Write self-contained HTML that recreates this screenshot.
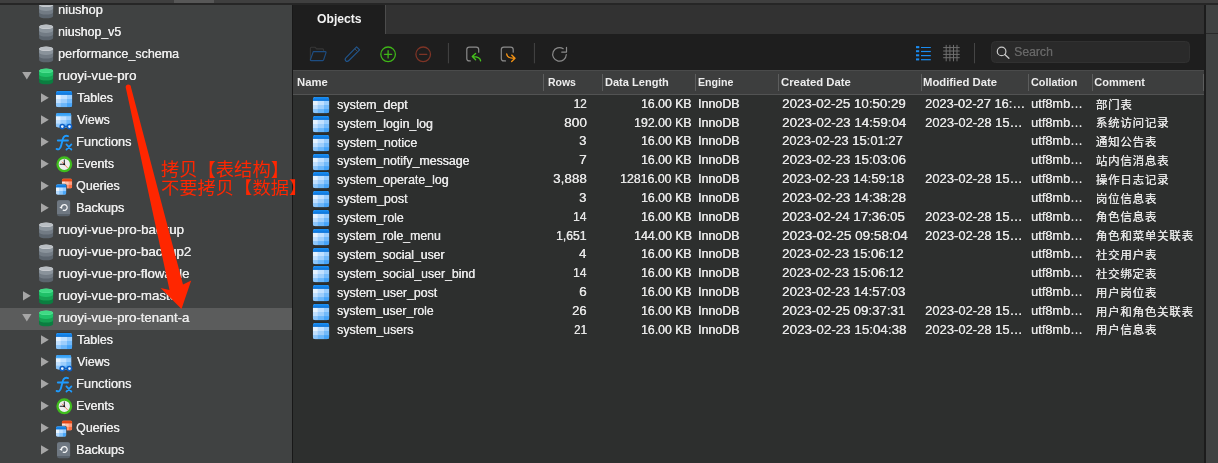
<!DOCTYPE html>
<html lang="zh"><head><meta charset="utf-8"><title>Navicat</title>
<style>
*{box-sizing:border-box;margin:0;padding:0}
html,body{width:1218px;height:463px;overflow:hidden;background:#2d2f2e}
body{font-family:"Liberation Sans","Noto Sans CJK SC",sans-serif;color:#e6e6e6}
#app{will-change:transform;position:relative;width:1218px;height:463px;overflow:hidden;background:#2d2f2e}
svg{display:block;overflow:visible}
.defs{position:absolute;width:0;height:0;overflow:hidden}
#topstrip{position:absolute;left:0;top:0;width:1218px;height:4.5px;background:linear-gradient(#3f3f3f 0,#3f3f3f 3px,#262626 3px,#262626 4.5px);z-index:5}
#topthumb{position:absolute;left:174px;top:0;width:40px;height:3px;background:#575757;z-index:6}
#sidebar{position:absolute;left:0;top:0;width:291.5px;height:463px;background:#404242;overflow:hidden}
#divider{position:absolute;left:291.5px;top:4px;width:1.5px;height:459px;background:#181818}
.trow{position:absolute;left:0;width:291.5px;height:22px}
.trow.sel{background:none}
#selband{position:absolute;left:0;top:307.8px;width:291.5px;height:22px;background:#5b5c5c}
.trow .tri{position:absolute;top:6px}
.trow.l0 .tri{left:21.5px}
.trow.l1 .tri{left:39.5px}
.trow .ticon{position:absolute;top:2.7px}
.trow.l0 .ticon{left:37px}
.trow.l1 .ticon{left:55px}
#main{position:absolute;left:293px;top:0;width:925px;height:463px}
#tabbar{position:absolute;left:0;top:4.5px;width:912px;height:29.5px;background:#323232}
#tab{position:absolute;left:0;top:0;width:92.8px;height:29.5px;background:#1e1e1e;border-right:1px solid #4c4c4c}
#toolbar{position:absolute;left:0;top:34px;width:912px;height:36px;background:#1e1e1e}
#toolbar svg{position:absolute;left:0;top:0}
#search{position:absolute;left:698px;top:7px;width:199px;height:21.5px;background:#2a2a2a;border:1px solid #313131;border-radius:4.5px}
#thead{position:absolute;left:0;top:70px;width:912px;height:25px;background:#3d3e3e;border-top:1.5px solid #4a4b4b;border-bottom:1px solid #525353}
.sep{position:absolute;top:2.5px;width:1px;height:17px;background:#5c5d5d}
.sep.c-rows{left:250.2px}.sep.c-len{left:309px}.sep.c-eng{left:402.1px}.sep.c-cre{left:485px}.sep.c-mod{left:628.2px}.sep.c-col{left:735px}.sep.c-com{left:799px}.sep.c-end{left:910.2px}
#tbody{position:absolute;left:0;top:0;width:912px}
.ricon{position:absolute;left:19px}
#rpanel{position:absolute;left:911.3px;top:4.5px;width:13.7px;height:458.5px;background:#404242;border-left:2.5px solid #1c1c1c}
#rpanel:after{content:"";position:absolute;left:0;top:28.5px;width:12px;height:1px;background:#2a2a2a}
#texts{position:absolute;left:0;top:0;width:1218px;height:463px;z-index:10}
.t{position:absolute;line-height:0;white-space:nowrap;transform-origin:0 0;color:#e8e8e8}
.t.tl{font-size:12.25px;color:#ebebeb}
.t.tn{font-size:12.5px;color:#e8e8e8}
.t.tc{font-size:12px;color:#e6e6e6}
.t.tk{font-size:11.5px;letter-spacing:0.75px;color:#e6e6e6}
.t.th{font-size:11px;font-weight:bold;color:#ededed}
.t.tab{font-size:12px;font-weight:bold;color:#f2f2f2}
.t.srch{font-size:12.25px;color:#656565;text-shadow:0.3px 0 0 currentColor}
#annot{position:absolute;left:0;top:0;width:1218px;height:463px;z-index:20;pointer-events:none}
.t.tl,.t.tn{text-shadow:0.35px 0 0 currentColor}
.t.tc{text-shadow:0.3px 0 0 currentColor}
.t.tk{text-shadow:0.25px 0 0 currentColor}

</style></head>
<body>
<svg class="defs">
<defs>
<linearGradient id="g-bluehead" x1="0" y1="0" x2="0" y2="1"><stop offset="0" stop-color="#1c92f6"/><stop offset="1" stop-color="#0a70d6"/></linearGradient>
<linearGradient id="g-viewhead" x1="0" y1="0" x2="0" y2="1"><stop offset="0" stop-color="#2a98f3"/><stop offset="1" stop-color="#55b2f9"/></linearGradient>
<linearGradient id="g-orangehead" x1="0" y1="0" x2="0" y2="1"><stop offset="0" stop-color="#f4511e"/><stop offset="1" stop-color="#d8400f"/></linearGradient>
<clipPath id="cp-table"><rect x="0.8" y="0.9" width="16.5" height="16.3" rx="2.6"/></clipPath>
<clipPath id="cp-view"><rect x="0.8" y="0.9" width="15.6" height="14.6" rx="2.4"/></clipPath>
<symbol id="i-tri-open" viewBox="0 0 10 10"><path d="M0.2 1 L9.5 1 L4.85 8.6 Z" fill="#a6a6a6"/></symbol>
<symbol id="i-tri-closed" viewBox="0 0 10 10"><path d="M1 0.2 L8.8 4.8 L1 9.4 Z" fill="#a6a6a6"/></symbol>
<symbol id="i-db-gray" viewBox="0 0 18 18">
 <path d="M2.1 2.8 V14 A7 2.3 0 0 0 16.1 14 V2.8 Z" fill="#5c656e"/>
 <path d="M2.1 2.8 V10.3 A7 2.3 0 0 0 16.1 10.3 V2.8 Z" fill="#727b84"/>
 <path d="M2.1 2.8 V6.6 A7 2.3 0 0 0 16.1 6.6 V2.8 Z" fill="#8a939b"/>
 <ellipse cx="9.1" cy="2.8" rx="7" ry="2.3" fill="#d2d5d8"/>
 <ellipse cx="9.1" cy="2.6" rx="6.6" ry="1.9" fill="#b9bec3"/>
</symbol>
<symbol id="i-db-green" viewBox="0 0 18 18">
 <path d="M2.1 2.8 V14 A7 2.3 0 0 0 16.1 14 V2.8 Z" fill="#0b7d40"/>
 <path d="M2.1 2.8 V10.3 A7 2.3 0 0 0 16.1 10.3 V2.8 Z" fill="#15a052"/>
 <path d="M2.1 2.8 V6.6 A7 2.3 0 0 0 16.1 6.6 V2.8 Z" fill="#1fc068"/>
 <ellipse cx="9.1" cy="2.8" rx="7" ry="2.3" fill="#5be39a"/>
 <ellipse cx="9.1" cy="2.6" rx="6.6" ry="1.9" fill="#3fda84"/>
</symbol>
<symbol id="i-table" viewBox="0 0 18 18">
 <rect x="0.5" y="0.6" width="17.1" height="16.9" rx="2.9" fill="#1f2021" opacity=".55"/>
 <g clip-path="url(#cp-table)">
  <rect x="0.8" y="0.9" width="16.5" height="16.4" fill="#9dcefc"/>
  <rect x="0.8" y="0.9" width="16.5" height="4.1" fill="url(#g-bluehead)"/>
  <rect x="0.8" y="4.9" width="5.1" height="4.2" fill="#e4f2ff"/><rect x="5.8" y="4.9" width="6.3" height="4.2" fill="#c0e0ff"/><rect x="12" y="4.9" width="5.3" height="4.2" fill="#9bcefe"/>
  <rect x="0.8" y="9" width="5.1" height="4.2" fill="#c0e0ff"/><rect x="5.8" y="9" width="6.3" height="4.2" fill="#9dcefc"/><rect x="12" y="9" width="5.3" height="4.2" fill="#72bafb"/>
  <rect x="0.8" y="13.1" width="5.1" height="4.2" fill="#8cc6fb"/><rect x="5.8" y="13.1" width="6.3" height="4.2" fill="#6ab6fa"/><rect x="12" y="13.1" width="5.3" height="4.2" fill="#46a4f8"/>
 </g>
</symbol>
<symbol id="i-tables" viewBox="0 0 18 18"><use href="#i-table"/></symbol>
<symbol id="i-views" viewBox="0 0 18 18">
 <g clip-path="url(#cp-view)">
  <rect x="0.8" y="0.9" width="15.6" height="14.7" fill="#9dcefc"/>
  <rect x="0.8" y="0.9" width="15.6" height="3.6" fill="url(#g-viewhead)"/>
  <rect x="0.8" y="4.4" width="5" height="3.8" fill="#e4f2ff"/><rect x="5.6" y="4.4" width="6" height="3.8" fill="#c0e0ff"/><rect x="11.4" y="4.4" width="5" height="3.8" fill="#9bcefe"/>
  <rect x="0.8" y="8" width="5" height="3.9" fill="#c0e0ff"/><rect x="5.6" y="8" width="6" height="3.9" fill="#9dcefc"/><rect x="11.4" y="8" width="5" height="3.9" fill="#72bafb"/>
  <rect x="0.8" y="11.7" width="5" height="4" fill="#8cc6fb"/><rect x="5.6" y="11.7" width="6" height="4" fill="#6ab6fa"/><rect x="11.4" y="11.7" width="5" height="4" fill="#46a4f8"/>
 </g>
 <path d="M9.3 14.3 H12.5" stroke="#0c5fc6" stroke-width="1.3" fill="none"/>
 <circle cx="7.3" cy="14.6" r="2.1" fill="#e8f4ff" stroke="#0c5fc6" stroke-width="1.5"/>
 <circle cx="14.5" cy="14.6" r="2.1" fill="#e8f4ff" stroke="#0c5fc6" stroke-width="1.5"/>
</symbol>
<symbol id="i-fx" viewBox="0 0 18 18">
 <path d="M1.6 14.9 C3.5 16 5.2 15 6 12 L8 4.5 C8.7 2 10.6 1.2 13 2.1" fill="none" stroke="#1e9bff" stroke-width="1.9" stroke-linecap="round"/>
 <path d="M2.8 6.5 H13" stroke="#1e9bff" stroke-width="1.8" stroke-linecap="round"/>
 <path d="M11.4 10.3 L16.4 15.7 M16.4 10.3 L11.4 15.7" fill="none" stroke="#1e9bff" stroke-width="1.7" stroke-linecap="round"/>
</symbol>
<symbol id="i-events" viewBox="0 0 18 18">
 <circle cx="9.3" cy="8.3" r="6.8" fill="#ededed" stroke="#3fbd1d" stroke-width="2.3"/>
 <path d="M7.2 6 L12.5 11.8" stroke="#f0794f" stroke-width="0.9" stroke-linecap="round"/>
 <path d="M9.3 8.3 V3.9" stroke="#222" stroke-width="1" stroke-linecap="round"/>
 <path d="M9.3 8.3 H5.2" stroke="#222" stroke-width="1.1" stroke-linecap="round"/>
 <circle cx="9.3" cy="8.3" r="0.9" fill="#111"/>
</symbol>
<symbol id="i-queries" viewBox="0 0 18 18">
 <clipPath id="cp-q1"><rect x="6.8" y="0.5" width="10.4" height="10" rx="1.8"/></clipPath>
 <clipPath id="cp-q2"><rect x="1" y="6.3" width="10.3" height="10.4" rx="1.8"/></clipPath>
 <g clip-path="url(#cp-q1)">
  <rect x="6.8" y="0.5" width="10.4" height="10" fill="#ff9a78"/>
  <rect x="6.8" y="0.5" width="10.4" height="3.1" fill="url(#g-orangehead)"/>
  <rect x="6.8" y="3.6" width="3.6" height="3.3" fill="#ffe3d9"/><rect x="10.4" y="3.6" width="3.4" height="3.3" fill="#ffc2ad"/><rect x="13.8" y="3.6" width="3.4" height="3.3" fill="#ff9f80"/>
  <rect x="6.8" y="6.9" width="3.6" height="3.6" fill="#ffc2ad"/><rect x="10.4" y="6.9" width="3.4" height="3.6" fill="#ff9573"/><rect x="13.8" y="6.9" width="3.4" height="3.6" fill="#fc6f43"/>
 </g>
 <rect x="0.5" y="5.8" width="11.3" height="11.4" rx="2.2" fill="#404242"/>
 <g clip-path="url(#cp-q2)">
  <rect x="1" y="6.3" width="10.3" height="10.4" fill="#8cc6fb"/>
  <rect x="1" y="6.3" width="10.3" height="3.3" fill="url(#g-bluehead)"/>
  <rect x="1" y="9.6" width="3.5" height="3.5" fill="#e9f5ff"/><rect x="4.5" y="9.6" width="3.4" height="3.5" fill="#c0e0ff"/><rect x="7.9" y="9.6" width="3.4" height="3.5" fill="#9bcefe"/>
  <rect x="1" y="13.1" width="3.5" height="3.6" fill="#b6dbfe"/><rect x="4.5" y="13.1" width="3.4" height="3.6" fill="#86c4fb"/><rect x="7.9" y="13.1" width="3.4" height="3.6" fill="#4aa6f8"/>
 </g>
</symbol>
<symbol id="i-backups" viewBox="0 0 18 18">
 <rect x="2" y="0.2" width="13.1" height="16" rx="2.2" fill="#58616a"/>
 <path d="M2 13.9 V2.4 A2.2 2.2 0 0 1 4.2 0.2 H12.9 A2.2 2.2 0 0 1 15.1 2.4 V13.9 Z" fill="#6f7882"/>
 <path d="M6.4 7.1 A2.9 2.9 0 1 1 8.2 10.2" fill="none" stroke="#f4f5f6" stroke-width="1.25" stroke-linecap="round"/>
 <path d="M4.3 7.5 L7.2 6 L7.2 8.9 Z" fill="#f4f5f6"/>
</symbol>
</defs>
</svg>
<div id="app">
<div id="topstrip"></div><div id="topthumb"></div>
<div id="sidebar">
<div id="selband"></div>
<div class="trow l0" style="top:-0.6px"><svg class="ticon" width="18" height="18"><use href="#i-db-gray"/></svg></div>
<div class="trow l0" style="top:21.4px"><svg class="ticon" width="18" height="18"><use href="#i-db-gray"/></svg></div>
<div class="trow l0" style="top:43.4px"><svg class="ticon" width="18" height="18"><use href="#i-db-gray"/></svg></div>
<div class="trow l0" style="top:65.4px"><svg class="tri" width="10" height="10"><use href="#i-tri-open"/></svg><svg class="ticon" width="18" height="18"><use href="#i-db-green"/></svg></div>
<div class="trow l1" style="top:87.4px"><svg class="tri" width="10" height="10"><use href="#i-tri-closed"/></svg><svg class="ticon" width="18" height="18"><use href="#i-tables"/></svg></div>
<div class="trow l1" style="top:109.4px"><svg class="tri" width="10" height="10"><use href="#i-tri-closed"/></svg><svg class="ticon" width="18" height="18"><use href="#i-views"/></svg></div>
<div class="trow l1" style="top:131.4px"><svg class="tri" width="10" height="10"><use href="#i-tri-closed"/></svg><svg class="ticon" width="18" height="18"><use href="#i-fx"/></svg></div>
<div class="trow l1" style="top:153.4px"><svg class="tri" width="10" height="10"><use href="#i-tri-closed"/></svg><svg class="ticon" width="18" height="18"><use href="#i-events"/></svg></div>
<div class="trow l1" style="top:175.4px"><svg class="tri" width="10" height="10"><use href="#i-tri-closed"/></svg><svg class="ticon" width="18" height="18"><use href="#i-queries"/></svg></div>
<div class="trow l1" style="top:197.4px"><svg class="tri" width="10" height="10"><use href="#i-tri-closed"/></svg><svg class="ticon" width="18" height="18"><use href="#i-backups"/></svg></div>
<div class="trow l0" style="top:219.4px"><svg class="ticon" width="18" height="18"><use href="#i-db-gray"/></svg></div>
<div class="trow l0" style="top:241.4px"><svg class="ticon" width="18" height="18"><use href="#i-db-gray"/></svg></div>
<div class="trow l0" style="top:263.4px"><svg class="ticon" width="18" height="18"><use href="#i-db-gray"/></svg></div>
<div class="trow l0" style="top:285.4px"><svg class="tri" width="10" height="10"><use href="#i-tri-closed"/></svg><svg class="ticon" width="18" height="18"><use href="#i-db-green"/></svg></div>
<div class="trow l0 sel" style="top:307.4px"><svg class="tri" width="10" height="10"><use href="#i-tri-open"/></svg><svg class="ticon" width="18" height="18"><use href="#i-db-green"/></svg></div>
<div class="trow l1" style="top:329.4px"><svg class="tri" width="10" height="10"><use href="#i-tri-closed"/></svg><svg class="ticon" width="18" height="18"><use href="#i-tables"/></svg></div>
<div class="trow l1" style="top:351.4px"><svg class="tri" width="10" height="10"><use href="#i-tri-closed"/></svg><svg class="ticon" width="18" height="18"><use href="#i-views"/></svg></div>
<div class="trow l1" style="top:373.4px"><svg class="tri" width="10" height="10"><use href="#i-tri-closed"/></svg><svg class="ticon" width="18" height="18"><use href="#i-fx"/></svg></div>
<div class="trow l1" style="top:395.4px"><svg class="tri" width="10" height="10"><use href="#i-tri-closed"/></svg><svg class="ticon" width="18" height="18"><use href="#i-events"/></svg></div>
<div class="trow l1" style="top:417.4px"><svg class="tri" width="10" height="10"><use href="#i-tri-closed"/></svg><svg class="ticon" width="18" height="18"><use href="#i-queries"/></svg></div>
<div class="trow l1" style="top:439.4px"><svg class="tri" width="10" height="10"><use href="#i-tri-closed"/></svg><svg class="ticon" width="18" height="18"><use href="#i-backups"/></svg></div>
</div>
<div id="divider"></div>
<div id="main">
<div id="tabbar"><div id="tab"></div></div>
<div id="toolbar">
<div id="search"></div>
<svg width="911.5" height="36" viewBox="293 34 911.5 36" fill="none" stroke-linecap="round" stroke-linejoin="round">
 <!-- open folder -->
 <path d="M310.4 60.4 V48.3 A1 1 0 0 1 311.4 47.3 H315.2 L316.6 48.9 H322.6 A1 1 0 0 1 323.6 49.9 V51.4" stroke="#363636" stroke-width="1.1"/>
 <path d="M313.3 51.6 H325.3 A0.8 0.8 0 0 1 326 52.6 L323.6 59.9 A1 1 0 0 1 322.7 60.6 H311.1 A0.7 0.7 0 0 1 310.4 59.7 Z" stroke="#1d4d82" stroke-width="1.15"/>
 <!-- pencil -->
 <path d="M356.6 46.8 L359.6 49.8 L348.9 60.5 C347.9 61.5 346.6 61.6 345.8 60.8 C345 60 345.1 58.7 346.1 57.7 Z" stroke="#20558d" stroke-width="1.15"/>
 <path d="M354.7 48.7 L357.7 51.7" stroke="#3a4a5c" stroke-width="1"/>
 <!-- plus -->
 <circle cx="388.1" cy="54.3" r="7.3" stroke="#3fb618" stroke-width="1.3"/>
 <path d="M388.1 50.7 V57.9 M384.5 54.3 H391.7" stroke="#3fb618" stroke-width="1.3"/>
 <!-- minus -->
 <circle cx="423.2" cy="54.3" r="7.3" stroke="#7e3426" stroke-width="1.3"/>
 <path d="M419.6 54.3 H426.8" stroke="#7e3426" stroke-width="1.3"/>
 <!-- sep -->
 <path d="M448.4 43 V63.3" stroke="#454545" stroke-width="1" stroke-linecap="butt"/>
 <!-- import -->
 <path d="M478.7 52.2 V49.6 A2.5 2.5 0 0 0 476.2 47.1 H469.3 A2.5 2.5 0 0 0 466.8 49.6 V58.4 A2.5 2.5 0 0 0 469.3 60.9 H470.3" stroke="#8b8b8b" stroke-width="1.2"/>
 <path d="M480.6 60.9 C480.3 57.9 478.1 56.5 472.6 56.6 M475.6 53.4 L472.3 56.6 L475.6 59.8" stroke="#46c31d" stroke-width="1.35"/>
 <!-- export -->
 <path d="M513.2 52.2 V49.6 A2.5 2.5 0 0 0 510.7 47.1 H503.8 A2.5 2.5 0 0 0 501.3 49.6 V58.4 A2.5 2.5 0 0 0 503.8 60.9 H505.5" stroke="#8b8b8b" stroke-width="1.2"/>
 <path d="M506.7 54 C507 57 509.2 58.4 514.7 58.3 M511.7 55.1 L515 58.3 L511.7 61.5" stroke="#f39213" stroke-width="1.35"/>
 <!-- sep -->
 <path d="M534.4 43 V63.3" stroke="#454545" stroke-width="1" stroke-linecap="butt"/>
 <!-- refresh -->
 <path d="M566.3 54.6 A6.8 6.8 0 1 1 563.2 48.7" stroke="#8a8a8a" stroke-width="1.2"/>
 <path d="M566.5 47.3 V52.1 H561.7" stroke="#8a8a8a" stroke-width="1.2"/>
 <!-- list view -->
 <g stroke="#1a8cf2" stroke-width="1.2" stroke-linecap="butt">
  <path d="M916 47.2 H919.2 M921 47.5 H930.8" /><path d="M916 47.2 H919.2" stroke-width="2"/>
  <path d="M921 51.5 H930.8"/><path d="M916 51.2 H919.2" stroke-width="2"/>
  <path d="M921 55.6 H930.8"/><path d="M916 55.3 H919.2" stroke-width="2"/>
  <path d="M921 59.7 H930.8"/><path d="M916 59.4 H919.2" stroke-width="2"/>
 </g>
 <!-- grid view -->
 <g stroke="#6f6f6f" stroke-width="1" stroke-linecap="butt">
  <path d="M946.2 44.9 V61.3 M949.9 44.9 V61.3 M953.5 44.9 V61.3 M957 44.9 V61.3"/>
  <path d="M943.2 47.6 H959.7 M943.2 51 H959.7 M943.2 54.4 H959.7 M943.2 57.7 H959.7"/>
 </g>
 <path d="M974.5 43 V63.3" stroke="#454545" stroke-width="1" stroke-linecap="butt"/>
 <!-- magnifier -->
 <circle cx="1001.6" cy="51.4" r="4.3" stroke="#c9c9c9" stroke-width="1.2"/>
 <path d="M1004.8 54.6 L1008.9 58.3" stroke="#c9c9c9" stroke-width="1.3"/>
</svg>
</div>
<div id="thead"><i class="sep c-rows"></i><i class="sep c-len"></i><i class="sep c-eng"></i><i class="sep c-cre"></i><i class="sep c-mod"></i><i class="sep c-col"></i><i class="sep c-com"></i><i class="sep c-end"></i></div>
<div id="tbody">
<svg class="ricon" style="top:96.25px" width="18" height="18"><use href="#i-table"/></svg><svg class="ricon" style="top:115.05px" width="18" height="18"><use href="#i-table"/></svg><svg class="ricon" style="top:133.85px" width="18" height="18"><use href="#i-table"/></svg><svg class="ricon" style="top:152.65px" width="18" height="18"><use href="#i-table"/></svg><svg class="ricon" style="top:171.45px" width="18" height="18"><use href="#i-table"/></svg><svg class="ricon" style="top:190.25px" width="18" height="18"><use href="#i-table"/></svg><svg class="ricon" style="top:209.05px" width="18" height="18"><use href="#i-table"/></svg><svg class="ricon" style="top:227.85px" width="18" height="18"><use href="#i-table"/></svg><svg class="ricon" style="top:246.65px" width="18" height="18"><use href="#i-table"/></svg><svg class="ricon" style="top:265.45px" width="18" height="18"><use href="#i-table"/></svg><svg class="ricon" style="top:284.25px" width="18" height="18"><use href="#i-table"/></svg><svg class="ricon" style="top:303.05px" width="18" height="18"><use href="#i-table"/></svg><svg class="ricon" style="top:321.85px" width="18" height="18"><use href="#i-table"/></svg>
</div>
<div id="rpanel"></div>
</div>
<div id="texts">
<span class="t tl" style="left:57.75px;top:9.76px;transform:scaleX(1.0401)">niushop</span>
<span class="t tl" style="left:57.78px;top:31.76px;transform:scaleX(1.0052)">niushop_v5</span>
<span class="t tl" style="left:57.79px;top:53.76px;transform:scaleX(1.0209)">performance_schema</span>
<span class="t tl" style="left:57.72px;top:75.76px;transform:scaleX(1.0849)">ruoyi-vue-pro</span>
<span class="t tl" style="left:76.52px;top:97.76px;transform:scaleX(1.0103)">Tables</span>
<span class="t tl" style="left:76.75px;top:119.76px;transform:scaleX(1.0060)">Views</span>
<span class="t tl" style="left:75.75px;top:141.76px;transform:scaleX(1.0424)">Functions</span>
<span class="t tl" style="left:75.79px;top:163.76px;transform:scaleX(1.0097)">Events</span>
<span class="t tl" style="left:76.21px;top:185.76px;transform:scaleX(1.0138)">Queries</span>
<span class="t tl" style="left:75.77px;top:207.76px;transform:scaleX(1.0223)">Backups</span>
<span class="t tl" style="left:57.72px;top:229.76px;transform:scaleX(1.0877)">ruoyi-vue-pro-backup</span>
<span class="t tl" style="left:57.72px;top:251.76px;transform:scaleX(1.0860)">ruoyi-vue-pro-backup2</span>
<span class="t tl" style="left:57.72px;top:273.76px;transform:scaleX(1.0836)">ruoyi-vue-pro-flowable</span>
<span class="t tl" style="left:57.72px;top:295.76px;transform:scaleX(1.0851)">ruoyi-vue-pro-master</span>
<span class="t tl" style="left:57.72px;top:317.76px;transform:scaleX(1.0828)">ruoyi-vue-pro-tenant-a</span>
<span class="t tl" style="left:76.52px;top:339.76px;transform:scaleX(1.0103)">Tables</span>
<span class="t tl" style="left:76.75px;top:361.76px;transform:scaleX(1.0060)">Views</span>
<span class="t tl" style="left:75.75px;top:383.76px;transform:scaleX(1.0424)">Functions</span>
<span class="t tl" style="left:75.79px;top:405.76px;transform:scaleX(1.0097)">Events</span>
<span class="t tl" style="left:76.21px;top:427.76px;transform:scaleX(1.0138)">Queries</span>
<span class="t tl" style="left:75.77px;top:449.76px;transform:scaleX(1.0223)">Backups</span>
<span class="t tn" style="left:336.95px;top:105.12px;transform:scaleX(0.9946)">system_dept</span>
<span class="t tc" style="left:573.38px;top:103.79px">12</span>
<span class="t tc" style="left:641.07px;top:103.79px;transform:scaleX(1.0214)">16.00 KB</span>
<span class="t tc" style="left:698.46px;top:103.79px;transform:scaleX(1.0330)">InnoDB</span>
<span class="t tc" style="left:781.83px;top:103.79px;transform:scaleX(1.1097)">2023-02-25 10:50:29</span>
<span class="t tc" style="left:924.95px;top:103.79px;transform:scaleX(1.0711)">2023-02-27 16:…</span>
<span class="t tc" style="left:1031.27px;top:103.79px;transform:scaleX(1.0621)">utf8mb…</span>
<span class="t tk" style="left:1095.74px;top:104.62px">部门表</span>
<span class="t tn" style="left:336.96px;top:123.88px;transform:scaleX(0.9908)">system_login_log</span>
<span class="t tc" style="left:563.91px;top:122.61px;transform:scaleX(1.1376)">800</span>
<span class="t tc" style="left:634.16px;top:122.61px;transform:scaleX(1.0230)">192.00 KB</span>
<span class="t tc" style="left:698.46px;top:122.61px;transform:scaleX(1.0330)">InnoDB</span>
<span class="t tc" style="left:781.83px;top:122.61px;transform:scaleX(1.1148)">2023-02-23 14:59:04</span>
<span class="t tc" style="left:924.95px;top:122.61px;transform:scaleX(1.0810)">2023-02-28 15…</span>
<span class="t tc" style="left:1031.27px;top:122.61px;transform:scaleX(1.0621)">utf8mb…</span>
<span class="t tk" style="left:1095.74px;top:123.43px">系统访问记录</span>
<span class="t tn" style="left:336.95px;top:142.64px;transform:scaleX(1.0033)">system_notice</span>
<span class="t tc" style="left:579.40px;top:141.43px;transform:scaleX(1.0985)">3</span>
<span class="t tc" style="left:641.07px;top:141.43px;transform:scaleX(1.0214)">16.00 KB</span>
<span class="t tc" style="left:698.46px;top:141.43px;transform:scaleX(1.0330)">InnoDB</span>
<span class="t tc" style="left:781.85px;top:141.43px;transform:scaleX(1.0828)">2023-02-23 15:01:27</span>
<span class="t tc" style="left:1031.27px;top:141.43px;transform:scaleX(1.0621)">utf8mb…</span>
<span class="t tk" style="left:1095.74px;top:142.24px">通知公告表</span>
<span class="t tn" style="left:336.96px;top:161.40px;transform:scaleX(0.9870)">system_notify_message</span>
<span class="t tc" style="left:579.20px;top:160.25px;transform:scaleX(1.1457)">7</span>
<span class="t tc" style="left:641.07px;top:160.25px;transform:scaleX(1.0214)">16.00 KB</span>
<span class="t tc" style="left:698.46px;top:160.25px;transform:scaleX(1.0330)">InnoDB</span>
<span class="t tc" style="left:781.83px;top:160.25px;transform:scaleX(1.1111)">2023-02-23 15:03:06</span>
<span class="t tc" style="left:1031.27px;top:160.25px;transform:scaleX(1.0621)">utf8mb…</span>
<span class="t tk" style="left:1095.74px;top:161.05px">站内信消息表</span>
<span class="t tn" style="left:336.96px;top:180.16px;transform:scaleX(0.9905)">system_operate_log</span>
<span class="t tc" style="left:552.99px;top:179.07px;transform:scaleX(1.1239)">3,888</span>
<span class="t tc" style="left:620.26px;top:179.07px;transform:scaleX(1.0266)">12816.00 KB</span>
<span class="t tc" style="left:698.46px;top:179.07px;transform:scaleX(1.0330)">InnoDB</span>
<span class="t tc" style="left:781.84px;top:179.07px;transform:scaleX(1.0956)">2023-02-23 14:59:18</span>
<span class="t tc" style="left:924.95px;top:179.07px;transform:scaleX(1.0810)">2023-02-28 15…</span>
<span class="t tc" style="left:1031.27px;top:179.07px;transform:scaleX(1.0621)">utf8mb…</span>
<span class="t tk" style="left:1095.74px;top:179.86px">操作日志记录</span>
<span class="t tn" style="left:336.95px;top:198.92px;transform:scaleX(1.0046)">system_post</span>
<span class="t tc" style="left:579.40px;top:197.89px;transform:scaleX(1.0985)">3</span>
<span class="t tc" style="left:641.07px;top:197.89px;transform:scaleX(1.0214)">16.00 KB</span>
<span class="t tc" style="left:698.46px;top:197.89px;transform:scaleX(1.0330)">InnoDB</span>
<span class="t tc" style="left:781.83px;top:197.89px;transform:scaleX(1.1110)">2023-02-23 14:38:28</span>
<span class="t tc" style="left:1031.27px;top:197.89px;transform:scaleX(1.0621)">utf8mb…</span>
<span class="t tk" style="left:1095.74px;top:198.67px">岗位信息表</span>
<span class="t tn" style="left:336.96px;top:217.68px;transform:scaleX(0.9890)">system_role</span>
<span class="t tc" style="left:573.19px;top:216.71px;transform:scaleX(0.9973)">14</span>
<span class="t tc" style="left:641.07px;top:216.71px;transform:scaleX(1.0214)">16.00 KB</span>
<span class="t tc" style="left:698.46px;top:216.71px;transform:scaleX(1.0330)">InnoDB</span>
<span class="t tc" style="left:781.84px;top:216.71px;transform:scaleX(1.1009)">2023-02-24 17:36:05</span>
<span class="t tc" style="left:924.95px;top:216.71px;transform:scaleX(1.0810)">2023-02-28 15…</span>
<span class="t tc" style="left:1031.27px;top:216.71px;transform:scaleX(1.0621)">utf8mb…</span>
<span class="t tk" style="left:1095.74px;top:217.48px">角色信息表</span>
<span class="t tn" style="left:336.96px;top:236.44px;transform:scaleX(0.9811)">system_role_menu</span>
<span class="t tc" style="left:556.38px;top:235.53px;transform:scaleX(1.0112)">1,651</span>
<span class="t tc" style="left:633.66px;top:235.53px;transform:scaleX(1.0321)">144.00 KB</span>
<span class="t tc" style="left:698.46px;top:235.53px;transform:scaleX(1.0330)">InnoDB</span>
<span class="t tc" style="left:781.82px;top:235.53px;transform:scaleX(1.1274)">2023-02-25 09:58:04</span>
<span class="t tc" style="left:924.95px;top:235.53px;transform:scaleX(1.0810)">2023-02-28 15…</span>
<span class="t tc" style="left:1031.27px;top:235.53px;transform:scaleX(1.0621)">utf8mb…</span>
<span class="t tk" style="left:1095.74px;top:236.29px">角色和菜单关联表</span>
<span class="t tn" style="left:336.96px;top:255.20px;transform:scaleX(0.9784)">system_social_user</span>
<span class="t tc" style="left:579.30px;top:254.35px;transform:scaleX(1.0832)">4</span>
<span class="t tc" style="left:641.07px;top:254.35px;transform:scaleX(1.0214)">16.00 KB</span>
<span class="t tc" style="left:698.46px;top:254.35px;transform:scaleX(1.0330)">InnoDB</span>
<span class="t tc" style="left:781.84px;top:254.35px;transform:scaleX(1.0910)">2023-02-23 15:06:12</span>
<span class="t tc" style="left:1031.27px;top:254.35px;transform:scaleX(1.0621)">utf8mb…</span>
<span class="t tk" style="left:1095.74px;top:255.10px">社交用户表</span>
<span class="t tn" style="left:336.96px;top:273.96px;transform:scaleX(0.9831)">system_social_user_bind</span>
<span class="t tc" style="left:573.19px;top:273.17px;transform:scaleX(0.9973)">14</span>
<span class="t tc" style="left:641.07px;top:273.17px;transform:scaleX(1.0214)">16.00 KB</span>
<span class="t tc" style="left:698.46px;top:273.17px;transform:scaleX(1.0330)">InnoDB</span>
<span class="t tc" style="left:781.84px;top:273.17px;transform:scaleX(1.0910)">2023-02-23 15:06:12</span>
<span class="t tc" style="left:1031.27px;top:273.17px;transform:scaleX(1.0621)">utf8mb…</span>
<span class="t tk" style="left:1095.74px;top:273.91px">社交绑定表</span>
<span class="t tn" style="left:336.96px;top:292.72px;transform:scaleX(0.9857)">system_user_post</span>
<span class="t tc" style="left:579.10px;top:291.99px;transform:scaleX(1.1468)">6</span>
<span class="t tc" style="left:641.07px;top:291.99px;transform:scaleX(1.0214)">16.00 KB</span>
<span class="t tc" style="left:698.46px;top:291.99px;transform:scaleX(1.0330)">InnoDB</span>
<span class="t tc" style="left:781.83px;top:291.99px;transform:scaleX(1.1057)">2023-02-23 14:57:03</span>
<span class="t tc" style="left:1031.27px;top:291.99px;transform:scaleX(1.0621)">utf8mb…</span>
<span class="t tk" style="left:1095.74px;top:292.72px">用户岗位表</span>
<span class="t tn" style="left:336.96px;top:311.48px;transform:scaleX(0.9785)">system_user_role</span>
<span class="t tc" style="left:572.25px;top:310.81px;transform:scaleX(1.0846)">26</span>
<span class="t tc" style="left:641.07px;top:310.81px;transform:scaleX(1.0214)">16.00 KB</span>
<span class="t tc" style="left:698.46px;top:310.81px;transform:scaleX(1.0330)">InnoDB</span>
<span class="t tc" style="left:781.83px;top:310.81px;transform:scaleX(1.1044)">2023-02-25 09:37:31</span>
<span class="t tc" style="left:924.95px;top:310.81px;transform:scaleX(1.0810)">2023-02-28 15…</span>
<span class="t tc" style="left:1031.27px;top:310.81px;transform:scaleX(1.0621)">utf8mb…</span>
<span class="t tk" style="left:1095.74px;top:311.53px">用户和角色关联表</span>
<span class="t tn" style="left:336.96px;top:330.24px;transform:scaleX(0.9888)">system_users</span>
<span class="t tc" style="left:573.92px;top:329.63px;transform:scaleX(0.9582)">21</span>
<span class="t tc" style="left:641.07px;top:329.63px;transform:scaleX(1.0214)">16.00 KB</span>
<span class="t tc" style="left:698.46px;top:329.63px;transform:scaleX(1.0330)">InnoDB</span>
<span class="t tc" style="left:781.83px;top:329.63px;transform:scaleX(1.1156)">2023-02-23 15:04:38</span>
<span class="t tc" style="left:924.95px;top:329.63px;transform:scaleX(1.0810)">2023-02-28 15…</span>
<span class="t tc" style="left:1031.27px;top:329.63px;transform:scaleX(1.0621)">utf8mb…</span>
<span class="t tk" style="left:1095.74px;top:330.34px">用户信息表</span>
<span class="t th" style="left:296.54px;top:82.19px;transform:scaleX(1.0261)">Name</span>
<span class="t th" style="left:547.70px;top:82.19px;transform:scaleX(0.9520)">Rows</span>
<span class="t th" style="left:604.86px;top:82.19px;transform:scaleX(1.0042)">Data Length</span>
<span class="t th" style="left:697.69px;top:82.19px;transform:scaleX(0.9675)">Engine</span>
<span class="t th" style="left:780.64px;top:82.19px;transform:scaleX(1.0294)">Created Date</span>
<span class="t th" style="left:923.34px;top:82.19px;transform:scaleX(1.0268)">Modified Date</span>
<span class="t th" style="left:1030.96px;top:82.19px;transform:scaleX(0.9844)">Collation</span>
<span class="t th" style="left:1094.25px;top:82.19px">Comment</span>
<span class="t tab" style="left:317.20px;top:19.14px;transform:scaleX(1.0132)">Objects</span>
<span class="t srch" style="left:1014.15px;top:52.06px;transform:scaleX(0.9970)">Search</span>
</div>
<div id="annot">
<svg width="1218" height="463" viewBox="0 0 1218 463">
 <circle cx="128.3" cy="87.1" r="2.6" fill="#ff2600"/>
 <path d="M125.8 87.7 L130.8 86.5 L183 284.6 L191.2 280.5 L181.5 309 L160.6 287.9 L169.5 290 Z" fill="#ff2600"/>
 <text x="161" y="175.5" font-family="'Liberation Sans','Noto Sans CJK SC',sans-serif" font-size="18.3" font-weight="400" fill="#ff2600">拷贝【表结构】</text>
 <text transform="translate(0,194.4) scale(1,0.93) translate(0,-194.4)" x="161" y="194.4" font-family="'Liberation Sans','Noto Sans CJK SC',sans-serif" font-size="18.3" font-weight="400" fill="#ff2600">不要拷贝【数据】</text>
</svg>
</div>
</div>
</body></html>
